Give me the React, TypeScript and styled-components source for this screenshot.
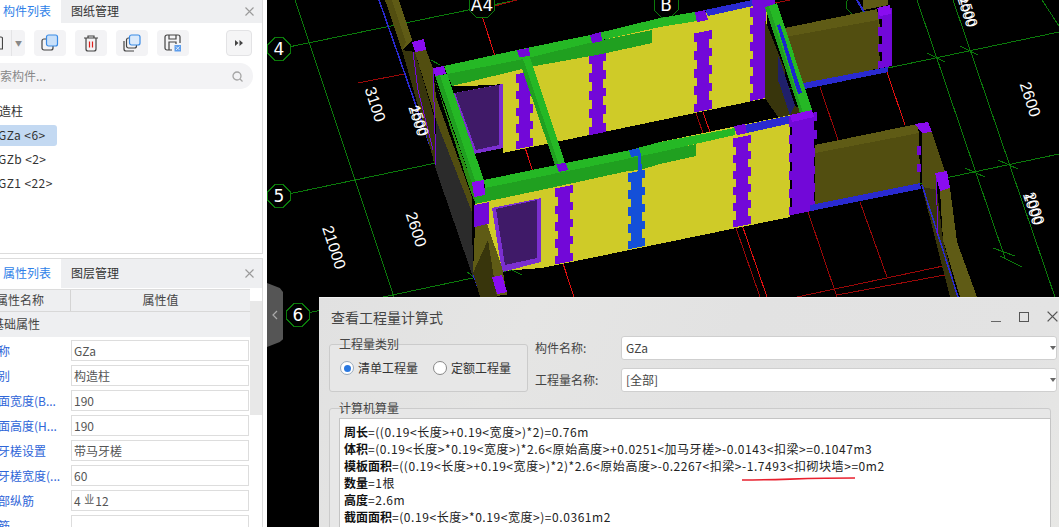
import React from "react";
import styled, { createGlobalStyle } from "styled-components";

const Global = createGlobalStyle`
  html, body { margin: 0; padding: 0; background: #fff; overflow: hidden; }
  * { box-sizing: border-box; }
`;
const FONT = `"Noto Sans CJK SC", "Noto Sans", sans-serif`;

const Page = styled.div`
  position: relative; width: 1059px; height: 527px; overflow: hidden; display: flex;
  font-family: ${FONT}; font-size: 12px; color: #333; background: #fff;
`;
const LeftColumn = styled.div`
  width: 263px; height: 527px; flex: none; display: flex; flex-direction: column; gap: 4px; overflow: hidden; background:#fff;
`;
const TopPanel = styled.section`
  height: 254px; flex: none; border-right: 1px solid #dcdcdc; border-bottom: 1px solid #dcdcdc; overflow: hidden; background: #fff;
`;
const BottomPanel = styled.section`
  flex: 1; min-height: 0; border-top: 1px solid #dcdcdc; border-right: 1px solid #dcdcdc; overflow: hidden; background: #fff; position: relative;
`;
const Tabs = styled.div<{ $h: number }>`
  height: ${p => p.$h}px; background: #eeeff1; display: flex; align-items: center; padding-right: 8px;
`;
const Tab = styled.div<{ $active?: boolean }>`
  height: 100%; display: flex; align-items: center; line-height: 16px; font-size: 12px; padding-bottom: 2px;
  width: ${p => (p.$active ? 61 : 82)}px; padding-left: ${p => (p.$active ? 3 : 10)}px;
  background: ${p => (p.$active ? "#fff" : "transparent")};
  color: ${p => (p.$active ? "#2f7fe8" : "#333")};
`;
const TabClose = styled.div` margin-left: auto; width: 9px; height: 9px; display: flex; svg { display: block; } `;
const Toolbar = styled.div` display: flex; gap: 9px; margin: 7px 10px 0 -15px; height: 26px; `;
const Split = styled.div`
  width: 40px; background: #f3f3f5; border-radius: 4px; display: flex; align-items: center; position: relative;
`;
const SplitLeft = styled.div` width: 27px; height: 100%; border-right: 1px solid #e4e4e6; display: flex; align-items: center; justify-content: flex-end; padding-right: 8px; svg { display: block; } `;
const SplitCaret = styled.div` flex: 1; display: flex; align-items: center; justify-content: center; color: #888; font-size: 7px; line-height: 8px;`;
const ToolBtn = styled.button`
  width: 32px; height: 26px; padding: 0; border: 0; border-radius: 4px; background: #f3f3f5; display: flex; align-items: center; justify-content: center;
`;
const MoreBtn = styled(ToolBtn)`
  width: 26px; margin-left: auto; background: #f5f5f6; border: 1px solid #e3e3e5;
`;
const Search = styled.div`
  height: 26px; margin: 7px 9px 0 -20px; border-radius: 13px; background: #f3f3f5; display: flex; align-items: center;
  padding: 0 10px 0 8px; color: #888; line-height: 16px;
`;
const SearchIcon = styled.div` margin-left: auto; display: flex; `;
const Tree = styled.div` margin: 10px 0 0 -16px; `;
const TreeRow = styled.div` height: 24px; display: flex; align-items: center; `;
const TreeLabel = styled.div<{ $selected?: boolean }>`
  height: 21px; width: 73px; line-height: 20px; padding-left: 3px; border-radius: 3px;
  white-space: pre; color: #333; background: ${p => (p.$selected ? "#c3d9f2" : "transparent")};
`;
const ChildLabel = styled(TreeLabel)` padding-left: 14px; letter-spacing: 0.4px; `;

const Table = styled.div` width: 280px; margin: 1px 0 0 -30px; `;
const HeadRow = styled.div`
  height: 23px; display: grid; grid-template-columns: 100px 180px; background: #eeeff1;
  border-top: 1px solid #dcdcdc; border-bottom: 1px solid #d8d8d8; line-height: 20px;
`;
const HeadCell = styled.div`
  text-align: center; color: #444;
  & + & { border-left: 1px solid #d4d4d4; }
`;
const SectionRow = styled.div`
  height: 25px; background: #eeeff1; line-height: 24px; padding-left: 22px; color: #444;
`;
const PropRow = styled.div`
  height: 25px; display: grid; grid-template-columns: 101px 178px; align-items: center;
`;
const PropName = styled.div` color: #2f66d8; padding-left: 16px; white-space: nowrap; line-height: 16px; overflow: hidden; `;
const PropInput = styled.div`
  height: 21px; border: 1px solid #dddddd; background: #fff; padding-left: 2px; line-height: 19px; color: #555; white-space: nowrap;
`;
const Rebar = styled.span` font-size: 10px; position: relative; top: -3px; margin: 0 1px; `;
const RowsBody = styled.div` padding-top: 1px; `;
const ScrollThumb = styled.div`
  position: absolute; left: 250px; top: 42px; width: 12px; height: 114px; background: #e8e8e8;
`;

const Viewport = styled.div` margin-left: 4px; width: 792px; height: 527px; background: #000; flex: none; svg { display: block; } `;

const Handle = styled.div`
  position: absolute; left: 267px; top: 283px; width: 16px; height: 64px; background: #555;
  clip-path: polygon(0 0, 80% 8%, 100% 14%, 100% 88%, 80% 92%, 0 100%);
  display: flex; align-items: center; justify-content: center; svg { display: block; }
`;

const Dialog = styled.div`
  position: absolute; left: 319px; top: 297px; width: 760px; height: 240px;
  background: linear-gradient(115deg, #e1e1e1 0%, #e5e5e4 25%, #e2e2e2 50%, #e3e3e3 85%, #e9e9e6 100%);
  border-top: 1px solid #efefef; padding: 0 28px 0 10px;
`;
const TitleBar = styled.div` height: 38px; display: flex; align-items: center; padding-left: 2px; padding-bottom: 1px; `;
const Title = styled.div` font-size: 14px; line-height: 20px; color: #444; `;
const WinBtns = styled.div` position: absolute; left: 672px; top: 13px; display: flex; gap: 18px; align-items: center; svg { display: block; } `;
const TopGrid = styled.div` display: grid; grid-template-columns: 199px auto; column-gap: 7px; `;
const Group = styled.div<{ $h: number }>`
  position: relative; height: ${p => p.$h}px; border: 1px solid #cbcbcb; border-radius: 3px; background: #e7e7e7;
`;
const GroupLabel = styled.div` position: absolute; left: 9px; top: -9px; line-height: 16px; color: #444; `;
const KindGroup = styled(Group)` margin-top: 8px; display: flex; align-items: center; padding: 0 0 0 10px; gap: 15px; `;
const Radio = styled.label` display: flex; align-items: center; gap: 4px; line-height: 16px; color: #333; `;
const RadioDot = styled.span<{ $on?: boolean }>`
  width: 14px; height: 14px; border-radius: 50%; border: 1px solid ${p => (p.$on ? "#9ab" : "#888")}; background: #fff; display: inline-flex; align-items: center; justify-content: center;
  &::after { content: ""; width: 7px; height: 7px; border-radius: 50%; background: ${p => (p.$on ? "#2a78e0" : "transparent")}; }
`;
const FormCol = styled.div` display: flex; flex-direction: column; gap: 8px; `;
const FormRow = styled.div` display: flex; align-items: center; `;
const FormLabel = styled.div` width: 86px; line-height: 16px; color: #444; `;
const SelectBox = styled.div`
  width: 436px; height: 24px; background: #fff; border: 1px solid #cfcfcf; border-radius: 3px; padding-left: 4px; line-height: 22px; color: #444; position: relative;
`;
const SelectCaret = styled.span`
  position: absolute; left: 428px; top: 9px; width: 0; height: 0; border: 3px solid transparent; border-top: 4px solid #666;
`;
const CalcGroup = styled(Group)` margin-top: 16px; padding: 9px 0 0 9px; `;
const CalcBox = styled.div`
  width: 712px; height: 130px; background: #fff; border: 1px solid #c4c4c4; padding: 4px 0 0 4px; position: relative;
`;
const CalcLine = styled.div` height: 17px; line-height: 17px; color: #222; white-space: nowrap; font-size: 12px; letter-spacing: 0.56px; `;
const B = styled.b` font-weight: 700; color: #111; letter-spacing: 0; `;
const Annot = styled.svg` position: absolute; left: 402px; top: 58px; overflow: visible; `;

/* ---------- drawing helpers ---------- */
const toothed = (xl: number, xr: number, yt: number, yb: number, n: number, il: number, ir: number = il) => {
  const pitch = (yb - yt) / n;
  const w = xr - xl;
  const left: string[] = [];
  const right: string[] = [];
  for (let i = 0; i < n; i++) {
    const wide = i % 2 === 0;
    const y1 = yt + i * pitch;
    const y2 = y1 + pitch;
    const lx = xl + (wide ? 0 : il);
    const rx = xr - (wide ? 0 : ir);
    left.push(`${lx},${(y1 + w * 0.2).toFixed(1)}`, `${lx},${(y2 + w * 0.2).toFixed(1)}`);
    right.push(`${rx},${y1.toFixed(1)}`, `${rx},${y2.toFixed(1)}`);
  }
  return [...right, ...left.reverse()].join(" ");
};

const P = ({ p, c }: { p: string; c: string }) => <polygon points={p} fill={c} />;
const L = ({ d, c, w = 1 }: { d: string; c: string; w?: number }) => <path d={d} stroke={c} strokeWidth={w} fill="none" />;

const G1 = "#0b7a0b";
const R1 = "#e01010";
const R2 = "#9a0808";
const Y = "#cfcb28";
const PU = "#7208d8";
const PC = "#8a0cf0";
const BL = "#1450d8";
const BB = "#2a2ad0";
const GR = "#25b825";
const GD = "#20a020";
const OL = "#5f5b15";
const OD = "#524e10";
const OE = "#38350c";

const Axis = ({ x, y, t, r = 12 }: { x: number; y: number; t: string; r?: number }) => {
  const pts = Array.from({ length: 8 }, (_, i) => {
    const a = (i * Math.PI) / 4 + Math.PI / 8;
    return `${(x + r * Math.cos(a)).toFixed(1)},${(y + r * Math.sin(a)).toFixed(1)}`;
  }).join(" ");
  return (
    <g>
      <polygon points={pts} fill="#000" stroke={G1} strokeWidth={1} />
      <text x={x} y={y + 6} fill="#fff" fontSize={17} fontFamily="DejaVu Sans, sans-serif" textAnchor="middle">{t}</text>
    </g>
  );
};
const Dim = ({ x, y, t, a = 72, s = 16 }: { x: number; y: number; t: string; a?: number; s?: number }) => (
  <text transform={`translate(${x} ${y}) rotate(${a})`} fill="#fff" fontSize={s} fontFamily="Liberation Sans, sans-serif" textAnchor="middle">{t}</text>
);

const Scene = () => (
  <svg width={792} height={527} viewBox="267 0 792 527" shapeRendering="crispEdges">
    <rect x={267} y={0} width={792} height={527} fill="#000" />
    {/* grid */}
    <L d="M279 49L517 0" c={G1} />
    <L d="M279 196L1059 32" c={G1} />
    <L d="M298 315L1059 154" c={G1} />
    <L d="M295 0L395 300" c={G1} />
    <L d="M917 0L1005 258" c={G1} />
    <L d="M953 0L1056 300" c={G1} />
    <L d="M1042 0L1059 26" c={G1} />
    <L d="M927 53L945 62M960 46L978 55M965 168L985 177M998 160L1018 169M993 248L1015 256M1000 256L1022 267" c={G1} />
    <L d="M431 60L440 65M433 160L441 166M467 272L474 277M512 270L522 275" c={G1} />
    <L d="M358 83L404 74M480 10L517 0" c={R2} />
    <L d="M480 10L575 300" c={R1} />
    <L d="M703 112L767 297M887 72L905 125" c={R1} />
    <L d="M696 113L760 297M820 87L838 140M808 212L837 297M860 202L887 277M797 297L948 265M837 295L950 274M775 3L790 0" c={R2} />
    <Axis x={279} y={49} t="4" />
    <Axis x={279} y={196} t="5" />
    <Axis x={298} y={315} t="6" />
    <Axis x={482} y={5} t="A4" r={14} />
    <Axis x={666} y={5} t="B" r={13} />
    <Axis x={856} y={5} t="" r={10} />

    {/* left wall */}
    <L d="M379 0L434 157L472 272L483 300" c={BB} w={1.5} />
    <P p="385,0 399,0 412,40 402,50" c={OL} />
    <P p="385,0 392,0 406,42 402,50" c={OD} />
    <P p="402,50 415,52 435,120 435,165" c={OE} />
    <P p="415,52 426,50 433,68 436,97 472,197 472,212 436,120" c={OD} />
    <P p="436,120 472,212 473,277 435,167" c={"#2b2b2b"} />
    <L d="M413 52L418 90L433 150M433 70L436 165" c={PU} />

    {/* upper wall */}
    <P p="452,86 660,23 767,0 767,98 503,153 503,85" c={Y} />
    <P p="454,88 503,84 503,153 474,158 462,125" c="#000" />
    <P p="454,93 503,84 503,148 474,154" c={"#7b2fd0"} />
    <P p="455,93 499,85 499,145 476,150" c={"#3f1a68"} />
    <polygon points={toothed(516, 533, 71, 146, 9, 3)} fill={PU} />
    <polygon points={toothed(589, 606, 52, 132, 9, 3)} fill={PU} />
    <polygon points={toothed(694, 712, 30, 109, 9, 3)} fill={PU} />
    <polygon points={toothed(750, 766, 5, 98, 11, 3, 0)} fill={PU} />
    <P p="444,66 517,50 590,35 660,18 695,12 697,21 660,27 602,40 519,60 447,74" c={GR} />
    <P p="447,74 519,60 602,40 652,30 652,43 602,54 535,66 452,86" c={GD} />
    <P p="705,10 752,0 753,6 708,16" c={BB} />
    <P p="695,12 705,10 708,20 697,22" c={PU} />
    <P p="752,0 775,0 775,4 765,7 753,8" c={PU} />
    <P p="590,35 601,32 602,41 592,43" c={PU} />
    <P p="517,50 529,48 530,56 519,57" c={PU} />
    <P p="433,68 444,66 446,74 435,76" c={PC} />
    <P p="412,42 424,39 426,50 415,52" c={PC} />

    {/* cross beams */}
    <P p="519,60 530,57 565,163 555,165" c={GR} />
    <P p="519,60 523,59 559,165 555,165" c={GD} />
    <P p="435,76 447,74 484,180 472,183" c={GR} />
    <P p="435,76 440,75 476,183 472,183" c={GD} />
    <P p="472,183 476,205 470,190 435,80" c={"#2a8a14"} />

    {/* right end of upper wall */}
    <P p="765,20 785,70 785,98 805,113 780,120 765,98" c={OE} />
    <P p="778,55 795,105 790,115 778,80" c={"#20206a"} />
    <P p="785,28 877,9 880,27 785,37" c={OL} />
    <P p="785,37 878,20 880,68 803,85" c={OD} />
    <P p="803,83 888,67 888,72 805,89" c={BB} />
    <P p="765,7 777,3 812,110 800,113" c={GR} />
    <P p="765,7 769,6 803,113 800,113" c={GD} />
    <P p="777,25 780,24 802,93 798,94" c={"#1c28d0"} />
    <P p="863,0 888,0 888,5 863,10" c={OL} />
    <L d="M857 0L864 12" c={BB} w={2} />
    <polygon points={toothed(878, 892, 8, 66, 7, 4, 0)} fill={PU} />
    <P p="877,8 890,5 891,14 880,16" c={PC} />

    {/* lower wall */}
    <P p="475,203 660,142 790,115 790,217 542,268 490,272 475,225" c={Y} />
    <P p="492,208 541,198 541,262 502,272" c="#7b2fd0" />
    <P p="496,209 537,200 537,258 505,265" c="#3f1a68" />
    <polygon points="474,205 489,202 489,224 474,227" fill={PU} />
    <polygon points={toothed(555, 573, 185, 261, 9, 3)} fill={PU} />
    <polygon points={toothed(628, 645, 170, 246, 9, 3)} fill={BL} />
    <polygon points={toothed(733, 751, 135, 224, 11, 3)} fill={PU} />
    <P p="475,197 485,188 628,158 628,171 555,187 475,204" c={GD} />
    <P p="628,158 696,144 696,156 660,164 640,170 628,171" c={GD} />
    <P p="484,180 556,165 630,150 660,142 735,128 735,135 695,144 660,152 485,188" c={GR} />
    <P p="745,125 792,115 792,123 747,133" c={BB} />
    <P p="734,126 745,124 747,133 737,135" c={PU} />
    <P p="629,150 639,148 641,155 631,157" c={BL} />
    <P p="638,155 641,155 642,172 638,172" c={BL} />
    <P p="556,164 566,163 568,170 559,172" c={PU} />
    <P p="472,182 484,180 485,195 474,197" c={PC} />
    <polygon points={toothed(789, 817, 112, 210, 11, 3)} fill={PU} />
    <polygon points="790,115 812,110 814,117 792,122" fill={PC} />

    {/* lower right wall */}
    <P p="815,145 917,124 919,133 815,153" c={OL} />
    <P p="815,153 919,133 920,183 815,204" c={OD} />
    <P p="810,205 920,183 921,189 810,211" c={BB} />
    <P p="915,124 928,122 932,132 922,133" c={PC} />
    <P p="917,146 921,146 921,155 917,155" c={PU} />
    <P p="917,164 921,164 921,172 917,172" c={PU} />
    <P p="922,133 932,132 945,172 937,173 937,240 922,187" c={OD} />
    <P p="940,191 950,188 957,242 977,297 960,297 943,240" c={OL} />
    <P p="922,187 937,190 943,240 958,297 950,297" c={OE} />
    <L d="M922 185L958 297" c={BB} w={1.5} />
    <L d="M936 175L938 235" c={PU} />
    <P p="935,173 947,171 950,188 940,191" c={PC} />

    {/* lower-left */}
    <P p="475,227 487,224 502,267 507,295 480,297 473,273" c={OL} />
    <P p="473,273 488,240 497,297 480,297" c={OE} />
    <P p="492,277 502,275 507,292 497,294" c={PC} />

    {/* labels */}
    <Dim x={370} y={106} t="3100" />
    <Dim x={411} y={231} t="2600" />
    <Dim x={329} y={249} t="21000" />
    <Dim x={1025} y={101} t="2600" />
    <Dim x={413} y={122} t="2000" s={14} />
    <Dim x={415} y={122} t="1500" s={14} />
    <Dim x={962} y={13} t="2000" s={14} />
    <Dim x={964} y={13} t="1500" s={14} />
    <Dim x={1028} y={210} t="1000" s={15} />
    <Dim x={1030} y={210} t="2000" s={15} />
  </svg>
);

const CopyIcon = () => (
  <svg width="18" height="18" viewBox="0 0 18 18" fill="none">
    <rect x="1" y="5" width="11" height="11" rx="2" stroke="#444" strokeWidth="1.2" />
    <rect x="5.5" y="1" width="11" height="11" rx="2" fill="#c9e0f9" stroke="#3a8be6" strokeWidth="1.2" />
  </svg>
);
const TrashIcon = () => (
  <svg width="16" height="18" viewBox="0 0 16 18" fill="none" stroke="#444" strokeWidth="1.2">
    <path d="M1 4h14M5 4V2h6v2M3 4v11a2 2 0 0 0 2 2h6a2 2 0 0 0 2-2V4" />
    <path d="M6.5 7.5v6M9.5 7.5v6" stroke="#e0201c" />
  </svg>
);
const StackIcon = () => (
  <svg width="18" height="18" viewBox="0 0 18 18" fill="none">
    <path d="M1 7v8a2 2 0 0 0 2 2h8" stroke="#444" strokeWidth="1.2" />
    <rect x="3.5" y="4" width="10" height="10" rx="2" stroke="#444" strokeWidth="1.2" />
    <rect x="6.5" y="1" width="10.5" height="10" rx="2" fill="#dbeafb" stroke="#3a8be6" strokeWidth="1.2" />
  </svg>
);
const SaveIcon = () => (
  <svg width="18" height="18" viewBox="0 0 18 18" fill="none">
    <path d="M8 16H3a2 2 0 0 1-2-2V3a2 2 0 0 1 2-2h11a2 2 0 0 1 2 2v6" stroke="#444" strokeWidth="1.2" />
    <path d="M5 16V8h7v2M5 1v4h7V1" stroke="#444" strokeWidth="1.2" />
    <rect x="10.5" y="11" width="6.5" height="6.5" fill="#5f9eec" />
    <path d="M12 12.5l3.5 3.5M15.5 12.5L12 16" stroke="#dbe9fb" strokeWidth="1" />
  </svg>
);
const X = ({ s = 9, c = "#9a9a9a" }: { s?: number; c?: string }) => (
  <svg width={s} height={s} viewBox="0 0 9 9"><path d="M.5.5l8 8M8.5.5l-8 8" stroke={c} strokeWidth="1.1" fill="none" /></svg>
);

const props: [string, React.ReactNode][] = [
  ["名称", "GZa"],
  ["类别", "构造柱"],
  ["截面宽度(B...", "190"],
  ["截面高度(H...", "190"],
  ["马牙槎设置", "带马牙槎"],
  ["马牙槎宽度(...", "60"],
  ["全部纵筋", <>4 <Rebar>业</Rebar>12</>],
  ["箍筋", ""],
];

export default function App() {
  return (
    <Page>
      <Global />
      <LeftColumn>
        <TopPanel>
          <Tabs $h={23}>
            <Tab $active>构件列表</Tab>
            <Tab>图纸管理</Tab>
            <TabClose><X /></TabClose>
          </Tabs>
          <Toolbar>
            <Split>
              <SplitLeft>
                <svg width="4" height="14" viewBox="0 0 4 14" fill="none"><path d="M0 1h2a1.5 1.5 0 0 1 1.5 1.5V13H0" stroke="#444" strokeWidth="1.2" /></svg>
              </SplitLeft>
              <SplitCaret>▼</SplitCaret>
            </Split>
            <ToolBtn><CopyIcon /></ToolBtn>
            <ToolBtn><TrashIcon /></ToolBtn>
            <ToolBtn><StackIcon /></ToolBtn>
            <ToolBtn><SaveIcon /></ToolBtn>
            <MoreBtn>
              <svg width="8" height="6" viewBox="0 0 8 6"><path d="M0 0l3.5 3L0 6zM4.5 0L8 3 4.5 6z" fill="#444" /></svg>
            </MoreBtn>
          </Toolbar>
          <Search>
            搜索构件...
            <SearchIcon>
              <svg width="11" height="11" viewBox="0 0 11 11" fill="none" stroke="#a5a5a5" strokeWidth="1.3"><circle cx="5" cy="5" r="4" /><path d="M8 8l2.5 2.5" /></svg>
            </SearchIcon>
          </Search>
          <Tree>
            <TreeRow><TreeLabel>构造柱</TreeLabel></TreeRow>
            <TreeRow><ChildLabel $selected>GZa &lt;6&gt;</ChildLabel></TreeRow>
            <TreeRow><ChildLabel>GZb &lt;2&gt;</ChildLabel></TreeRow>
            <TreeRow><ChildLabel>GZ1 &lt;22&gt;</ChildLabel></TreeRow>
          </Tree>
        </TopPanel>
        <BottomPanel>
          <Tabs $h={29}>
            <Tab $active>属性列表</Tab>
            <Tab>图层管理</Tab>
            <TabClose><X /></TabClose>
          </Tabs>
          <ScrollThumb />
          <Table>
            <HeadRow>
              <HeadCell>属性名称</HeadCell>
              <HeadCell>属性值</HeadCell>
            </HeadRow>
            <SectionRow>基础属性</SectionRow>
            <RowsBody>
              {props.map(([k, v]) => (
                <PropRow key={k}>
                  <PropName>{k}</PropName>
                  <PropInput>{v}</PropInput>
                </PropRow>
              ))}
            </RowsBody>
          </Table>
        </BottomPanel>
      </LeftColumn>
      <Viewport><Scene /></Viewport>
      <Handle>
        <svg width="6" height="10" viewBox="0 0 6 10"><path d="M5 1L1 5l4 4" stroke="#aaa" strokeWidth="1.2" fill="none" /></svg>
      </Handle>
      <Dialog>
        <TitleBar><Title>查看工程量计算式</Title></TitleBar>
        <WinBtns>
          <svg width="10" height="10" viewBox="0 0 10 10"><path d="M0 9.5h10" stroke="#666" /></svg>
          <svg width="10" height="10" viewBox="0 0 10 10"><rect x=".5" y=".5" width="9" height="9" fill="none" stroke="#555" /></svg>
          <X s={11} c="#555" />
        </WinBtns>
        <TopGrid>
          <KindGroup $h={48}>
            <GroupLabel>工程量类别</GroupLabel>
            <Radio><RadioDot $on />清单工程量</Radio>
            <Radio><RadioDot />定额工程量</Radio>
          </KindGroup>
          <FormCol>
            <FormRow><FormLabel>构件名称:</FormLabel><SelectBox>GZa<SelectCaret /></SelectBox></FormRow>
            <FormRow><FormLabel>工程量名称:</FormLabel><SelectBox>[全部]<SelectCaret /></SelectBox></FormRow>
          </FormCol>
        </TopGrid>
        <CalcGroup $h={140}>
          <GroupLabel>计算机算量</GroupLabel>
          <CalcBox>
            <CalcLine><B>周长</B>=((0.19&lt;长度&gt;+0.19&lt;宽度&gt;)*2)=0.76m</CalcLine>
            <CalcLine><B>体积</B>=(0.19&lt;长度&gt;*0.19&lt;宽度&gt;)*2.6&lt;原始高度&gt;+0.0251&lt;加马牙槎&gt;-0.0143&lt;扣梁&gt;=0.1047m3</CalcLine>
            <CalcLine><B>模板面积</B>=((0.19&lt;长度&gt;+0.19&lt;宽度&gt;)*2)*2.6&lt;原始高度&gt;-0.2267&lt;扣梁&gt;-1.7493&lt;扣砌块墙&gt;=0m2</CalcLine>
            <CalcLine><B>数量</B>=1根</CalcLine>
            <CalcLine><B>高度</B>=2.6m</CalcLine>
            <CalcLine><B>截面面积</B>=(0.19&lt;长度&gt;*0.19&lt;宽度&gt;)=0.0361m2</CalcLine>
            <Annot width="114" height="4" viewBox="0 0 114 4">
              <path d="M0 3C40 3 60 1 113 1" stroke="#e8202e" strokeWidth="1.6" fill="none" />
            </Annot>
          </CalcBox>
        </CalcGroup>
      </Dialog>
    </Page>
  );
}
